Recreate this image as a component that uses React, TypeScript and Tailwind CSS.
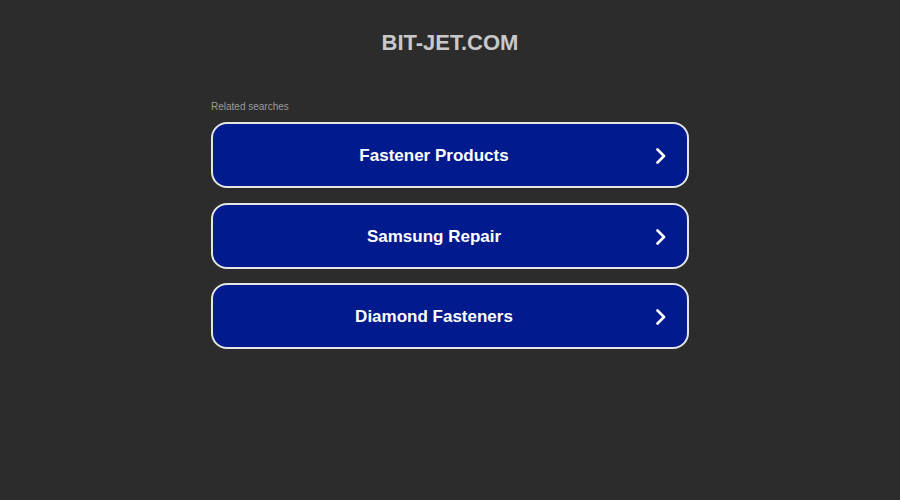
const items = ['Fastener Products', 'Samsung Repair', 'Diamond Fasteners'];

function Chevron() {
  return (
    <svg width="12" height="16" viewBox="0 0 12 16" fill="none" className="shrink-0">
      <path d="M2.5 1.5 L9 8 L2.5 14.5" stroke="white" strokeWidth="2.6" strokeLinecap="round" strokeLinejoin="round" />
    </svg>
  );
}

export default function App() {
  return (
    <div className="min-h-[500px] w-full bg-[#2c2c2c] font-['Liberation_Sans',Arial,sans-serif]">
      {/* Header */}
      <div className="pt-[30px] text-center">
        <h1 className="text-[22px] font-bold leading-[26px] text-[#c8c8c8]">BIT-JET.COM</h1>
      </div>

      {/* Related searches */}
      <div className="mx-auto mt-[44px] w-[478px]">
        <p className="text-[10px] leading-[14px] text-[#9b9b9b]">Related searches</p>
        <div className="mt-[8px] flex flex-col gap-[14.5px]">
          {items.map(item => (
            <a
              key={item}
              href="#"
              className="flex h-[66px] items-center rounded-[16px] border-2 border-[#e4e4e4] bg-[#011a8e] pr-[20px] pt-[2px]"
            >
              <span className="flex-1 text-center text-[17px] font-bold text-white">{item}</span>
              <Chevron />
            </a>
          ))}
        </div>
      </div>
    </div>
  );
}
